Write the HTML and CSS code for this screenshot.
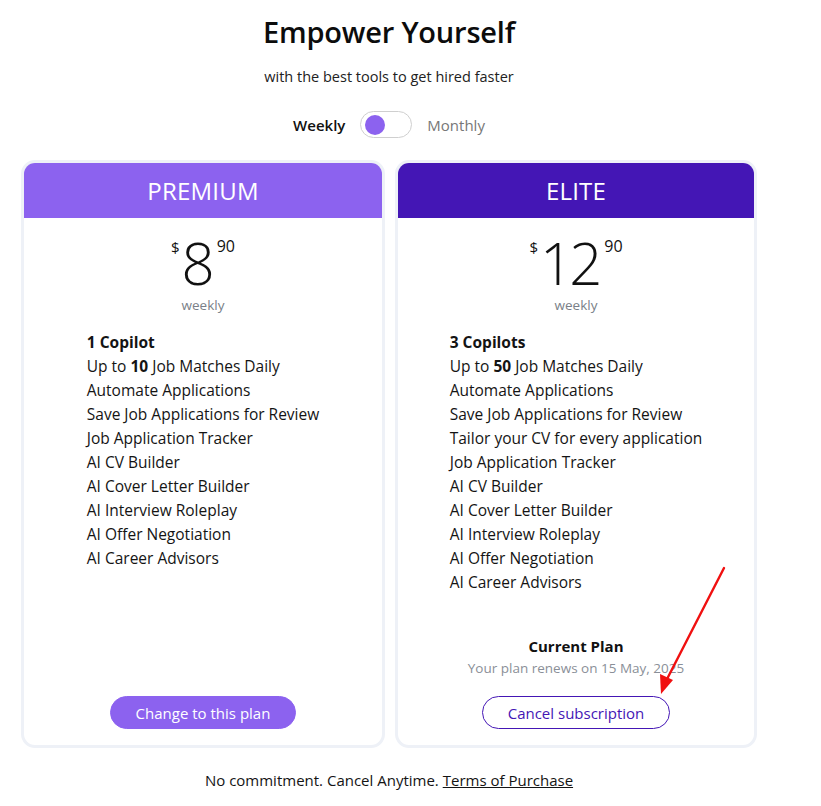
FILE: index.html
```html
<!DOCTYPE html>
<html lang="en">
<head>
<meta charset="utf-8">
<title>Empower Yourself</title>
<link rel="stylesheet" href="styles.css">
</head>
<body>
<main class="page">
  <h1 class="title">Empower Yourself</h1>
  <p class="subtitle">with the best tools to get hired faster</p>
  <div class="toggle-row">
    <span class="toggle-label active">Weekly</span>
    <span class="switch"><span class="knob"></span></span>
    <span class="toggle-label">Monthly</span>
  </div>

  <div class="plans">
    <section class="card">
      <header class="card-head premium">PREMIUM</header>
      <div class="price">
        <span class="cur">$</span><span class="amount">8</span><span class="cents">90</span>
      </div>
      <div class="period">weekly</div>
      <div class="features-wrap">
        <ul class="features">
          <li><b>1 Copilot</b></li>
          <li>Up to <b>10</b> Job Matches Daily</li>
          <li>Automate Applications</li>
          <li>Save Job Applications for Review</li>
          <li>Job Application Tracker</li>
          <li>AI CV Builder</li>
          <li>AI Cover Letter Builder</li>
          <li>AI Interview Roleplay</li>
          <li>AI Offer Negotiation</li>
          <li>AI Career Advisors</li>
        </ul>
      </div>
      <div class="card-foot">
        <button class="btn btn-fill">Change to this plan</button>
      </div>
    </section>

    <section class="card">
      <header class="card-head elite">ELITE</header>
      <div class="price">
        <span class="cur">$</span><span class="amount tight">12</span><span class="cents">90</span>
      </div>
      <div class="period">weekly</div>
      <div class="features-wrap">
        <ul class="features">
          <li><b>3 Copilots</b></li>
          <li>Up to <b>50</b> Job Matches Daily</li>
          <li>Automate Applications</li>
          <li>Save Job Applications for Review</li>
          <li>Tailor your CV for every application</li>
          <li>Job Application Tracker</li>
          <li>AI CV Builder</li>
          <li>AI Cover Letter Builder</li>
          <li>AI Interview Roleplay</li>
          <li>AI Offer Negotiation</li>
          <li>AI Career Advisors</li>
        </ul>
      </div>
      <div class="card-foot">
        <div class="current">Current Plan</div>
        <div class="renews">Your plan renews on 15 May, 2025</div>
        <button class="btn btn-outline">Cancel subscription</button>
      </div>
    </section>
  </div>

  <p class="footer">No commitment. Cancel Anytime. <a href="#" class="terms">Terms of Purchase</a></p>

  <svg class="arrow" width="80" height="140" viewBox="0 0 80 140" aria-hidden="true">
    <line x1="73" y1="7" x2="14" y2="122" stroke="#f01010" stroke-width="2.4" stroke-linecap="round"/>
    <polygon points="10,133 9,113 22,119" fill="#f01010"/>
  </svg>
</main>
</body>
</html>
```

FILE: styles.css
```css
* { box-sizing: border-box; }
html, body { margin: 0; padding: 0; background: #fff; }
body {
  font-family: "Open Sans", "Noto Sans", sans-serif;
  color: #111;
}
.page {
  position: relative;
  width: 736px;
  margin-left: 21px;
  padding-top: 13px;
}
.title {
  margin: 0;
  text-align: center;
  font-size: 29px;
  font-weight: 600;
  line-height: 38px;
  letter-spacing: -0.2px;
  color: #0c0c0c;
}
.subtitle {
  margin: 16px 0 0;
  text-align: center;
  font-size: 14.5px;
  line-height: 20px;
  color: #222;
}
.toggle-row {
  margin-top: 24px;
  display: flex;
  justify-content: center;
  align-items: center;
  gap: 15px;
}
.toggle-label { font-size: 15px; color: #777; }
.toggle-label.active { font-weight: 600; color: #111; }
.switch {
  width: 52px;
  height: 27px;
  border: 1px solid #cfcfcf;
  border-radius: 14px;
  display: flex;
  align-items: center;
  padding-left: 4px;
}
.knob {
  width: 20px;
  height: 20px;
  border-radius: 50%;
  background: #8c62ef;
}
.plans {
  margin-top: 22px;
  display: grid;
  grid-template-columns: 364px 362px;
  gap: 10px;
}
.card {
  border: 3px solid #eef1f7;
  border-radius: 14px;
  height: 588px;
  display: flex;
  flex-direction: column;
  overflow: hidden;
  background: #fff;
}
.card-head {
  height: 55px;
  display: flex;
  align-items: center;
  justify-content: center;
  color: #fff;
  font-size: 24px;
  font-weight: 400;
  letter-spacing: 0.2px;
}
.premium { background: #8c62ef; }
.elite { background: #4416b5; }
.price {
  margin-top: 18px;
  display: flex;
  justify-content: center;
  align-items: flex-start;
  height: 56px;
}
.cur {
  font-size: 15px;
  line-height: 18px;
  margin-top: 2px;
  margin-right: 2px;
}
.amount {
  font-size: 58px;
  font-weight: 300;
  line-height: 54px;
  letter-spacing: -2px;
  margin-right: 4px;
}
.amount.tight { letter-spacing: -4px; margin-right: 6px; }
.cents {
  font-size: 16px;
  line-height: 18px;
  margin-top: 1px;
}
.period {
  margin-top: 4px;
  text-align: center;
  font-size: 13.5px;
  line-height: 18px;
  color: #7a7f88;
}
.features-wrap {
  flex: 1;
  display: flex;
  justify-content: center;
  padding-top: 16px;
}
.features {
  list-style: none;
  margin: 0;
  padding: 0;
  font-size: 15.5px;
  line-height: 24px;
  color: #141414;
}
.features b { font-weight: 700; }
.card-foot {
  display: flex;
  flex-direction: column;
  align-items: center;
  padding-bottom: 16px;
}
.current {
  font-size: 15px;
  font-weight: 700;
  line-height: 22px;
}
.renews {
  margin-top: 1px;
  font-size: 13.5px;
  color: #8a8f98;
  line-height: 20px;
}
.btn {
  font-family: inherit;
  font-size: 15px;
  height: 33px;
  border-radius: 17px;
  cursor: pointer;
}
.btn-fill {
  width: 186px;
  background: #8c62ef;
  color: #fff;
  border: 1px solid #8c62ef;
}
.btn-outline {
  margin-top: 18px;
  width: 188px;
  background: #fff;
  color: #4416b5;
  border: 1px solid #4416b5;
}
.footer {
  margin: 22px 0 0;
  text-align: center;
  font-size: 15px;
  color: #141414;
}
.terms { color: #141414; text-decoration: underline; }
.arrow {
  position: absolute;
  left: 630px;
  top: 561px;
}
```
